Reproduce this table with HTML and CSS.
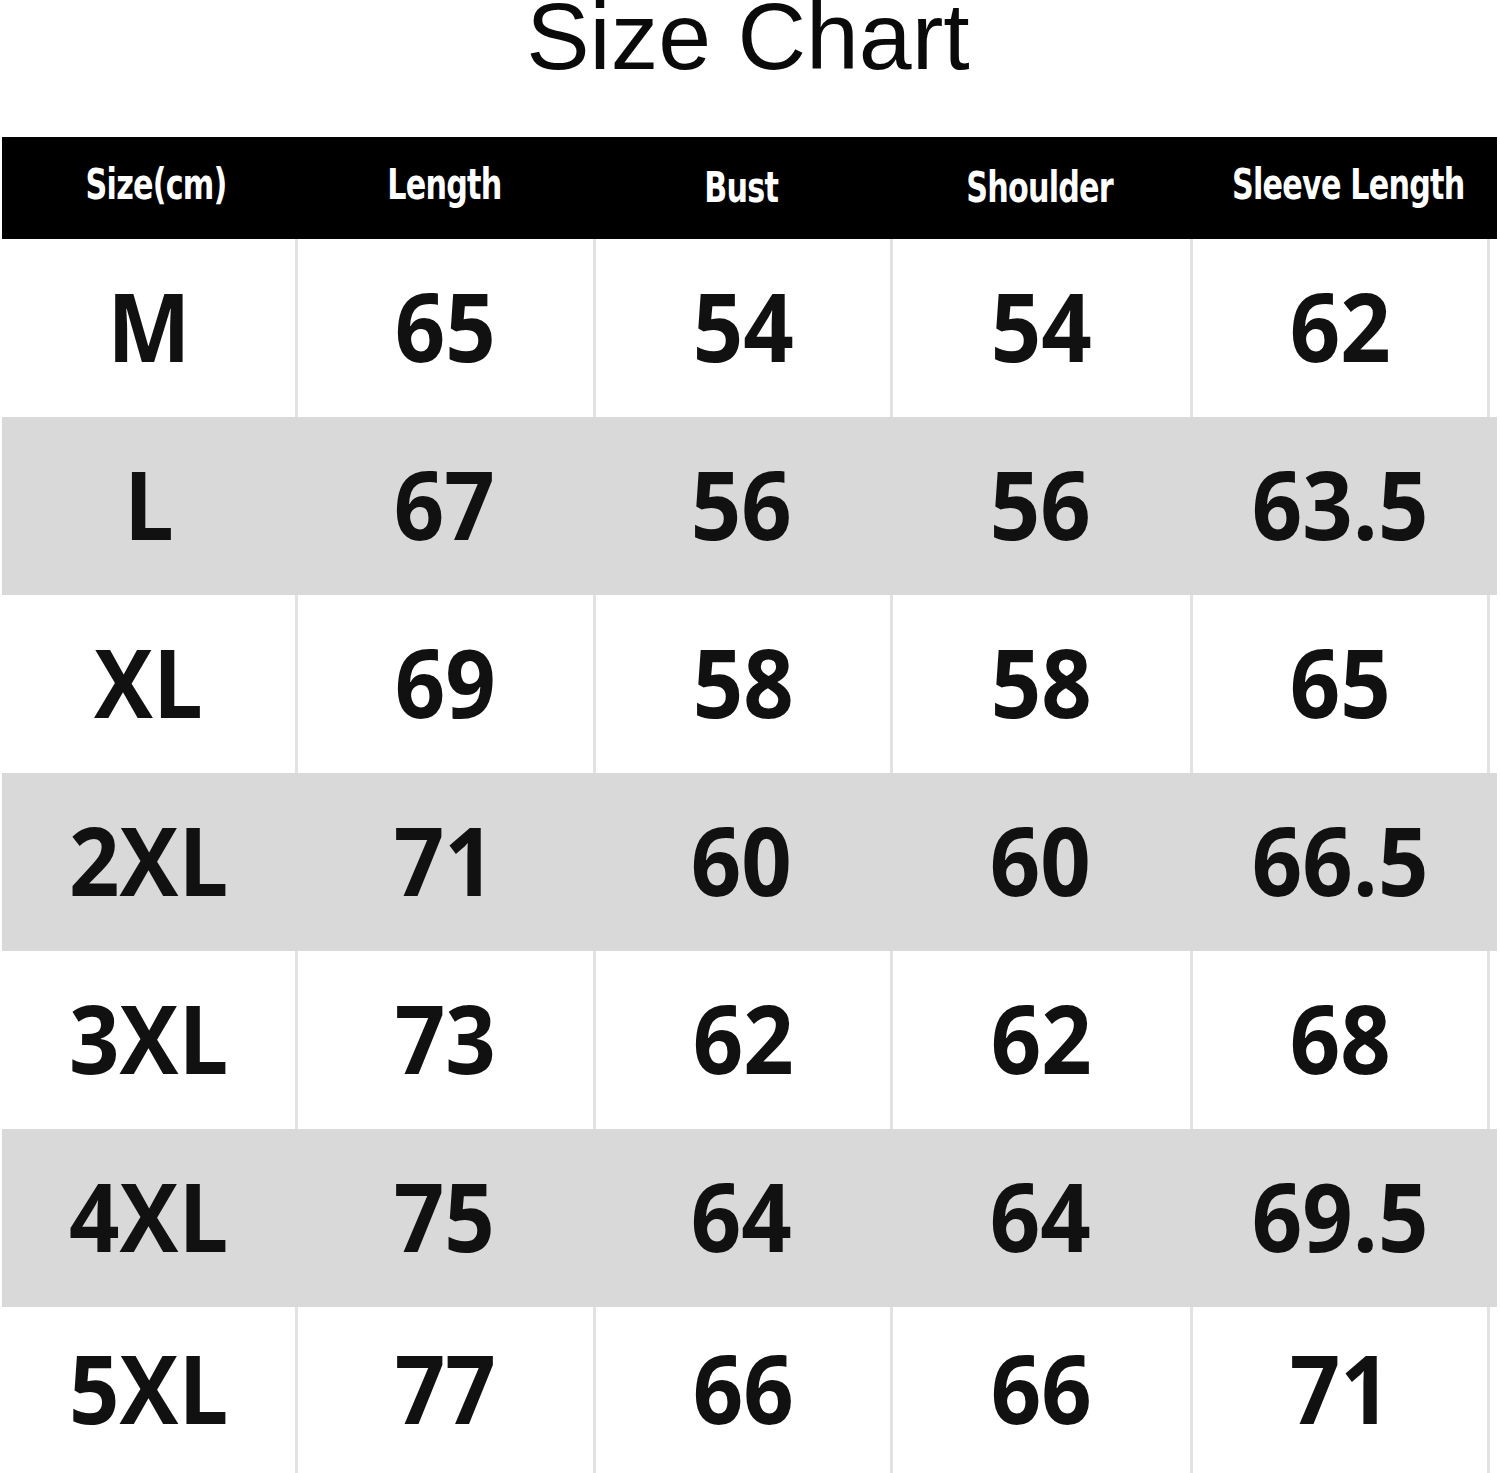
FILE: index.html
```html
<!DOCTYPE html>
<html>
<head>
<meta charset="utf-8">
<title>Size Chart</title>
<link rel="stylesheet" href="styles.css">
</head>
<body>
<h1 class="title">Size Chart</h1>
<div class="chart">
  <div class="row head">
    <div class="cell"><span class="hd shift">Size(cm)</span></div>
    <div class="cell"><span class="hd">Length</span></div>
    <div class="cell"><span class="hd low">Bust</span></div>
    <div class="cell"><span class="hd low">Shoulder</span></div>
    <div class="cell"><span class="hd shift">Sleeve Length</span></div>
  </div>
  <div class="row white">
    <div class="cell"><span class="v">M</span></div>
    <div class="cell"><span class="v">65</span></div>
    <div class="cell"><span class="v">54</span></div>
    <div class="cell"><span class="v">54</span></div>
    <div class="cell"><span class="v">62</span></div>
  </div>
  <div class="row gray">
    <div class="cell"><span class="v">L</span></div>
    <div class="cell"><span class="v">67</span></div>
    <div class="cell"><span class="v">56</span></div>
    <div class="cell"><span class="v">56</span></div>
    <div class="cell"><span class="v">63.5</span></div>
  </div>
  <div class="row white">
    <div class="cell"><span class="v">XL</span></div>
    <div class="cell"><span class="v">69</span></div>
    <div class="cell"><span class="v">58</span></div>
    <div class="cell"><span class="v">58</span></div>
    <div class="cell"><span class="v">65</span></div>
  </div>
  <div class="row gray">
    <div class="cell"><span class="v">2XL</span></div>
    <div class="cell"><span class="v">71</span></div>
    <div class="cell"><span class="v">60</span></div>
    <div class="cell"><span class="v">60</span></div>
    <div class="cell"><span class="v">66.5</span></div>
  </div>
  <div class="row white">
    <div class="cell"><span class="v">3XL</span></div>
    <div class="cell"><span class="v">73</span></div>
    <div class="cell"><span class="v">62</span></div>
    <div class="cell"><span class="v">62</span></div>
    <div class="cell"><span class="v">68</span></div>
  </div>
  <div class="row gray">
    <div class="cell"><span class="v">4XL</span></div>
    <div class="cell"><span class="v">75</span></div>
    <div class="cell"><span class="v">64</span></div>
    <div class="cell"><span class="v">64</span></div>
    <div class="cell"><span class="v">69.5</span></div>
  </div>
  <div class="row white last">
    <div class="cell"><span class="v">5XL</span></div>
    <div class="cell"><span class="v">77</span></div>
    <div class="cell"><span class="v">66</span></div>
    <div class="cell"><span class="v">66</span></div>
    <div class="cell"><span class="v">71</span></div>
  </div>
</div>
</body>
</html>
```
FILE: styles.css
```css
html, body {
  margin: 0;
  padding: 0;
  background: #ffffff;
}
body {
  width: 1500px;
  height: 1473px;
  overflow: hidden;
}
.title {
  margin: 0;
  font-family: "Liberation Sans", Arial, sans-serif;
  font-weight: normal;
  font-size: 95px;
  line-height: 72px;
  text-align: center;
  color: #0a0a0a;
  padding-right: 4px;
}
.chart {
  margin: 65px 3px 0 2px;
}
.row {
  display: grid;
  grid-template-columns: 293px 298px 297px 300px 300px;
  padding-right: 7px;
  height: 178px;
}
.row.last {
  height: 166px;
}
.row.head {
  height: 102px;
  background: #000000;
}
.row.gray {
  background: #d9d9d9;
}
.cell {
  display: flex;
  align-items: center;
  justify-content: center;
  box-sizing: border-box;
}
.white .cell + .cell {
  border-left: 3px solid #e2e2e2;
}
.white .cell:last-child {
  border-right: 3px solid #e2e2e2;
}
.hd {
  display: inline-block;
  white-space: nowrap;
  flex-shrink: 0;
  font-family: "DejaVu Sans", "Liberation Sans", sans-serif;
  font-stretch: condensed;
  font-weight: bold;
  font-size: 42px;
  color: #ffffff;
  letter-spacing: -1px;
  transform: scaleX(0.8);
  margin-top: -8px;
}
.hd.low {
  margin-top: -2px;
}
.hd.shift {
  margin-left: 16px;
}
.v {
  display: inline-block;
  white-space: nowrap;
  font-family: "Open Sans", "Noto Sans", sans-serif;
  font-weight: bold;
  font-size: 95px;
  line-height: 1;
  color: #111111;
  transform: scaleX(0.93);
  margin-top: -6px;
}
```
